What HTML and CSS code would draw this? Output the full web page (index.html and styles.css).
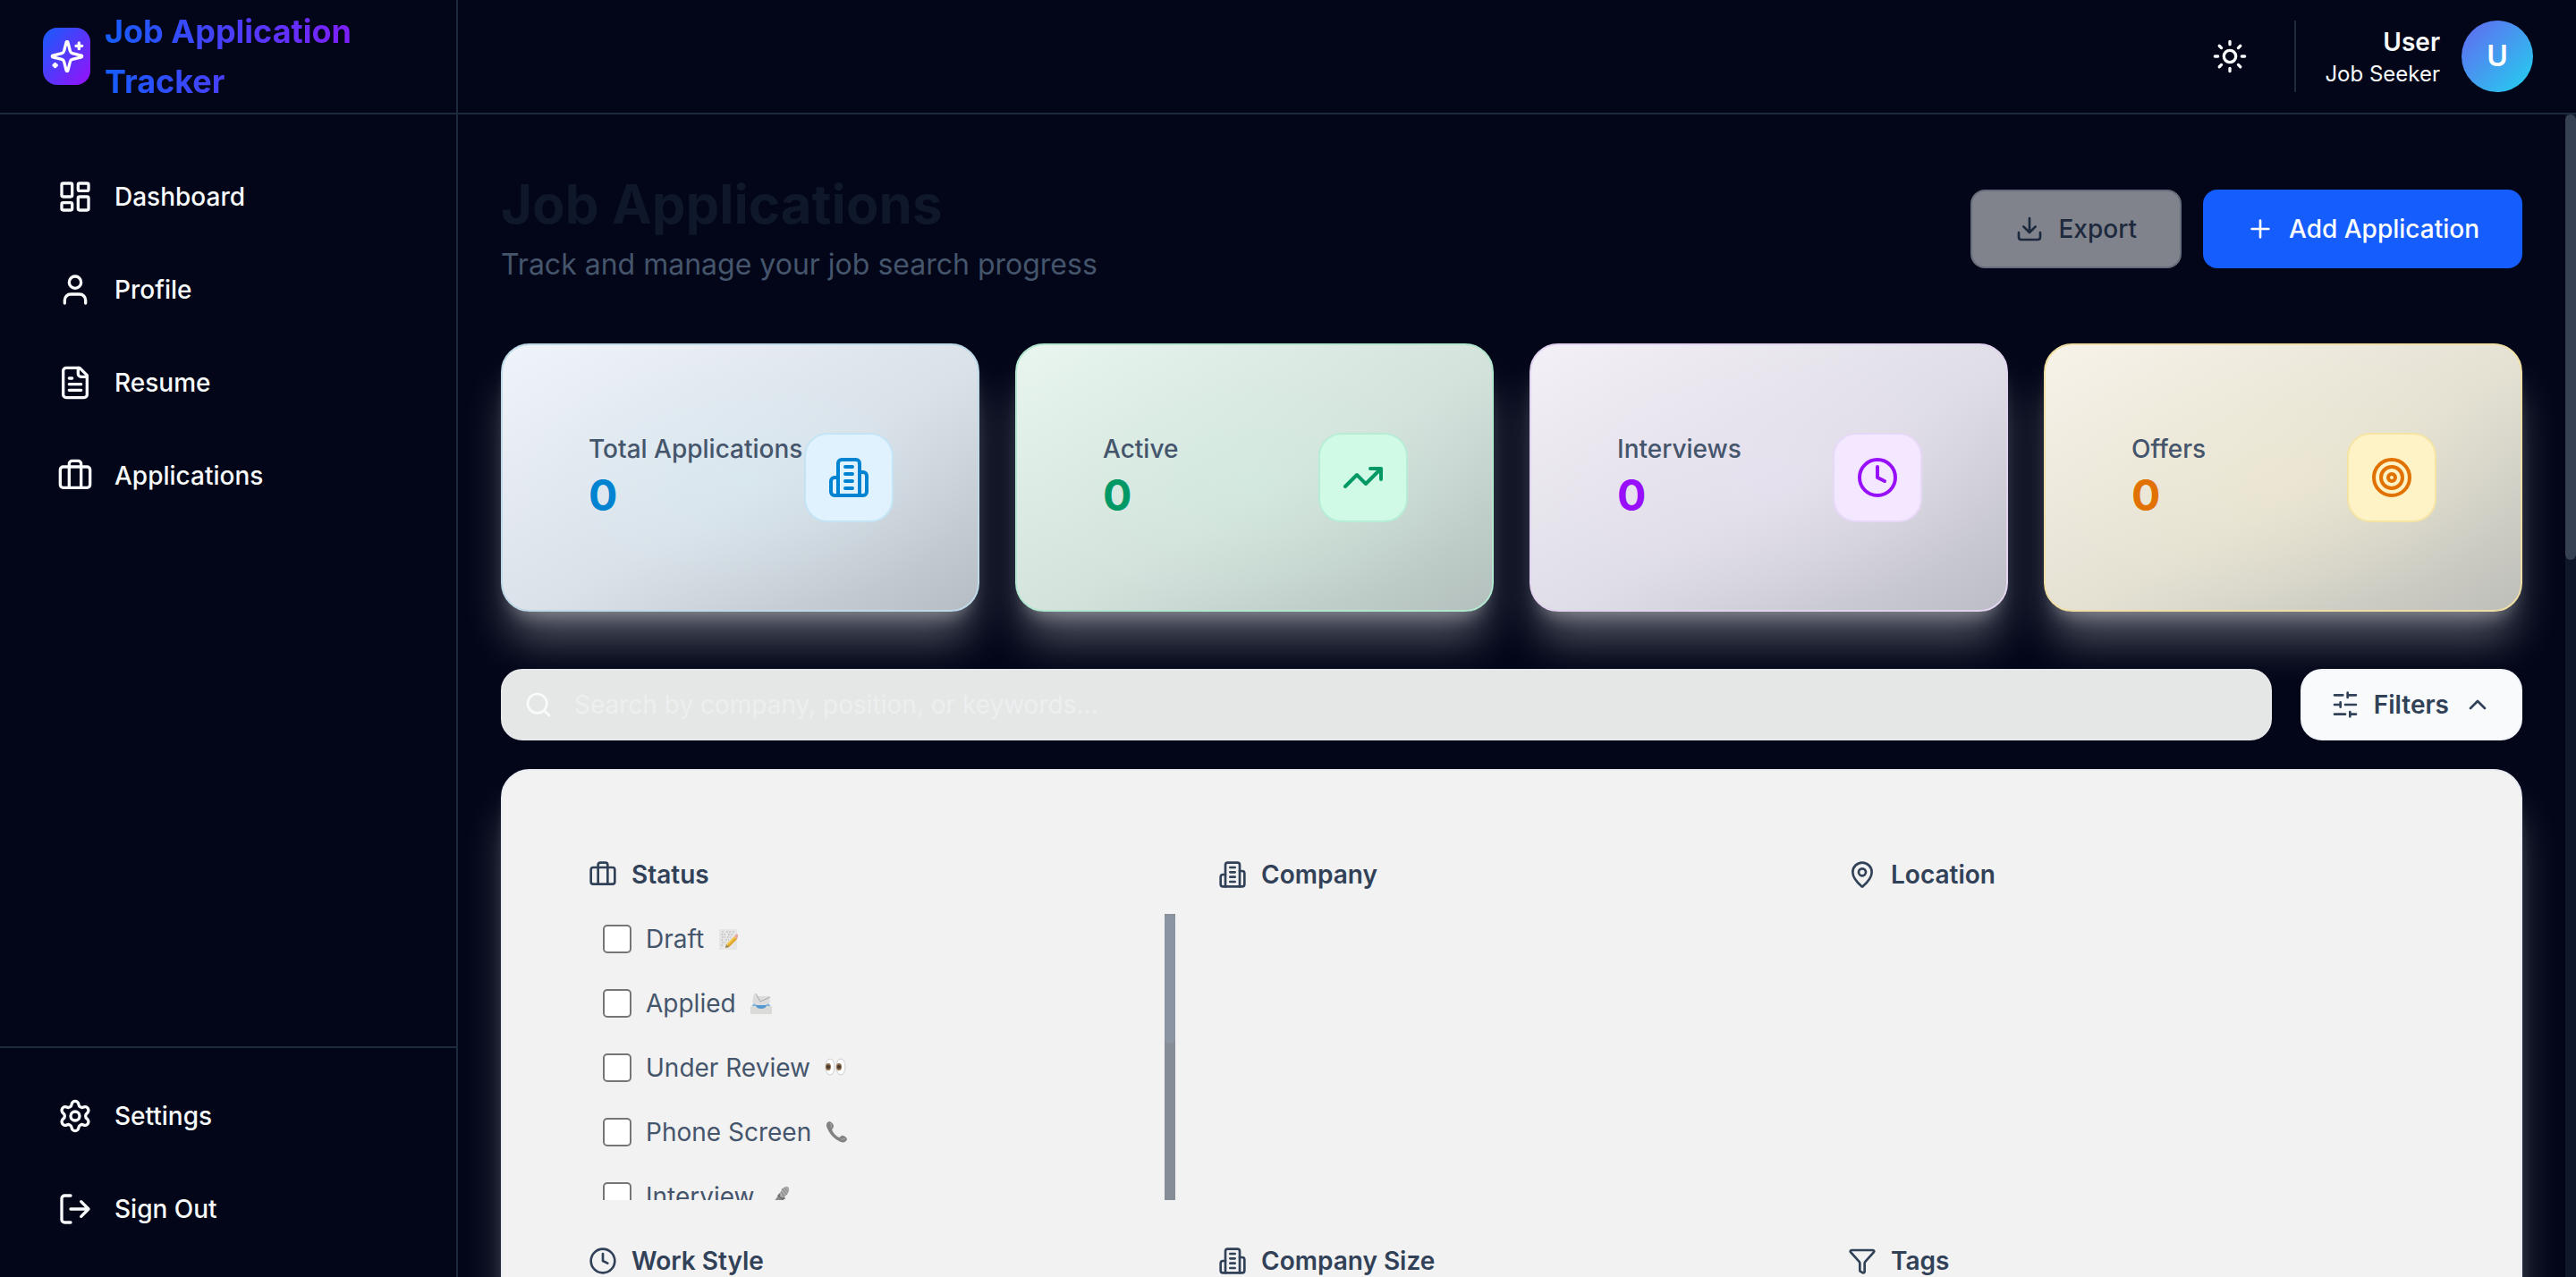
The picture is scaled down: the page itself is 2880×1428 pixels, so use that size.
FILE: index.html
```html
<!DOCTYPE html>
<html lang="en">
<head>
<meta charset="utf-8">
<meta name="viewport" content="width=device-width, initial-scale=1">
<title>Job Application Tracker</title>
<link rel="stylesheet" href="styles.css">
</head>
<body>
<svg class="sprite" aria-hidden="true">
  <symbol id="i-sparkles" viewBox="0 0 24 24"><path d="M9.937 15.5A2 2 0 0 0 8.5 14.063l-6.135-1.582a.5.5 0 0 1 0-.962L8.5 9.936A2 2 0 0 0 9.937 8.5l1.582-6.135a.5.5 0 0 1 .963 0L14.063 8.5A2 2 0 0 0 15.5 9.937l6.135 1.581a.5.5 0 0 1 0 .964L15.5 14.063a2 2 0 0 0-1.437 1.437l-1.582 6.135a.5.5 0 0 1-.963 0z"/><path d="M20 3v4M22 5h-4M4 17v2M5 18H3"/></symbol>
  <symbol id="i-dashboard" viewBox="0 0 24 24"><rect width="7" height="9" x="3" y="3" rx="1"/><rect width="7" height="5" x="14" y="3" rx="1"/><rect width="7" height="9" x="14" y="12" rx="1"/><rect width="7" height="5" x="3" y="16" rx="1"/></symbol>
  <symbol id="i-user" viewBox="0 0 24 24"><path d="M19 21v-2a4 4 0 0 0-4-4H9a4 4 0 0 0-4 4v2"/><circle cx="12" cy="7" r="4"/></symbol>
  <symbol id="i-file" viewBox="0 0 24 24"><path d="M15 2H6a2 2 0 0 0-2 2v16a2 2 0 0 0 2 2h12a2 2 0 0 0 2-2V7Z"/><path d="M14 2v4a2 2 0 0 0 2 2h4M10 9H8M16 13H8M16 17H8"/></symbol>
  <symbol id="i-briefcase" viewBox="0 0 24 24"><path d="M16 20V4a2 2 0 0 0-2-2h-4a2 2 0 0 0-2 2v16"/><rect width="20" height="14" x="2" y="6" rx="2"/></symbol>
  <symbol id="i-settings" viewBox="0 0 24 24"><path d="M9.671 4.136a2.34 2.34 0 0 1 4.659 0 2.34 2.34 0 0 0 3.319 1.915 2.34 2.34 0 0 1 2.33 4.033 2.34 2.34 0 0 0 0 3.831 2.34 2.34 0 0 1-2.33 4.033 2.34 2.34 0 0 0-3.319 1.915 2.34 2.34 0 0 1-4.659 0 2.34 2.34 0 0 0-3.32-1.915 2.34 2.34 0 0 1-2.33-4.033 2.34 2.34 0 0 0 0-3.831A2.34 2.34 0 0 1 6.35 6.051a2.34 2.34 0 0 0 3.319-1.915"/><circle cx="12" cy="12" r="3"/></symbol>
  <symbol id="i-logout" viewBox="0 0 24 24"><path d="m16 17 5-5-5-5M21 12H9M9 21H5a2 2 0 0 1-2-2V5a2 2 0 0 1 2-2h4"/></symbol>
  <symbol id="i-sun" viewBox="0 0 24 24"><circle cx="12" cy="12" r="4"/><path d="M12 2v2M12 20v2M4.93 4.93l1.41 1.41M17.66 17.66l1.41 1.41M2 12h2M20 12h2M6.34 17.66l-1.41 1.41M19.07 4.93l-1.41 1.41"/></symbol>
  <symbol id="i-download" viewBox="0 0 24 24"><path d="M12 15V3M21 15v4a2 2 0 0 1-2 2H5a2 2 0 0 1-2-2v-4M7 10l5 5 5-5"/></symbol>
  <symbol id="i-plus" viewBox="0 0 24 24"><path d="M5 12h14M12 5v14"/></symbol>
  <symbol id="i-building" viewBox="0 0 24 24"><path d="M6 22V4a2 2 0 0 1 2-2h8a2 2 0 0 1 2 2v18Z"/><path d="M6 12H4a2 2 0 0 0-2 2v6a2 2 0 0 0 2 2h2M18 9h2a2 2 0 0 1 2 2v9a2 2 0 0 1-2 2h-2M10 6h4M10 10h4M10 14h4M10 18h4"/></symbol>
  <symbol id="i-trend" viewBox="0 0 24 24"><path d="M16 7h6v6M22 7l-8.500 8.500-5-5L2 17"/></symbol>
  <symbol id="i-clock" viewBox="0 0 24 24"><circle cx="12" cy="12" r="10"/><path d="M12 6v6l4 2"/></symbol>
  <symbol id="i-target" viewBox="0 0 24 24"><circle cx="12" cy="12" r="10"/><circle cx="12" cy="12" r="6"/><circle cx="12" cy="12" r="2"/></symbol>
  <symbol id="i-search" viewBox="0 0 24 24"><path d="m21 21-4.340-4.340"/><circle cx="11" cy="11" r="8"/></symbol>
  <symbol id="i-sliders" viewBox="0 0 24 24"><path d="M21 4h-7M10 4H3M21 12h-9M8 12H3M21 20h-5M12 20H3M14 2v4M8 10v4M16 18v4"/></symbol>
  <symbol id="i-chevron-up" viewBox="0 0 24 24"><path d="m18 15-6-6-6 6"/></symbol>
  <symbol id="i-pin" viewBox="0 0 24 24"><path d="M20 10c0 4.993-5.539 10.193-7.399 11.799a1 1 0 0 1-1.202 0C9.539 20.193 4 14.993 4 10a8 8 0 0 1 16 0"/><circle cx="12" cy="10" r="3"/></symbol>
  <symbol id="i-funnel" viewBox="0 0 24 24"><path d="M10 20a1 1 0 0 0 .553.895l2 1A1 1 0 0 0 14 21v-7a2 2 0 0 1 .517-1.341L21.740 4.670A1 1 0 0 0 21 3H3a1 1 0 0 0-.742 1.670l7.225 7.989A2 2 0 0 1 10 14z"/></symbol>
</svg>

<div class="app">
  <aside class="sidebar">
    <div class="brand">
      <span class="brand-mark"><svg class="icon icon-md"><use href="#i-sparkles"/></svg></span>
      <span class="brand-name">Job Application Tracker</span>
    </div>
    <nav class="nav" aria-label="Main">
      <a class="nav-link" href="#dashboard"><svg class="icon icon-md"><use href="#i-dashboard"/></svg>Dashboard</a>
      <a class="nav-link" href="#profile"><svg class="icon icon-md"><use href="#i-user"/></svg>Profile</a>
      <a class="nav-link" href="#resume"><svg class="icon icon-md"><use href="#i-file"/></svg>Resume</a>
      <a class="nav-link" href="#applications"><svg class="icon icon-md"><use href="#i-briefcase"/></svg>Applications</a>
    </nav>
    <div class="nav nav-footer">
      <a class="nav-link" href="#settings"><svg class="icon icon-md"><use href="#i-settings"/></svg>Settings</a>
      <button class="nav-link" type="button"><svg class="icon icon-md"><use href="#i-logout"/></svg>Sign Out</button>
    </div>
  </aside>

  <div class="workspace">
    <header class="topbar">
      <button class="theme-toggle" type="button" aria-label="Toggle theme"><svg class="icon icon-md"><use href="#i-sun"/></svg></button>
      <div class="account">
        <div class="account-text">
          <span class="account-name">User</span>
          <span class="account-role">Job Seeker</span>
        </div>
        <span class="avatar">U</span>
      </div>
    </header>

    <div class="viewport">
      <main class="content">
        <div class="page-head">
          <div>
            <h1 class="page-title">Job Applications</h1>
            <p class="page-subtitle">Track and manage your job search progress</p>
          </div>
          <div class="actions">
            <button class="btn btn-export" type="button" disabled><svg class="icon icon-sm"><use href="#i-download"/></svg>Export</button>
            <button class="btn btn-primary" type="button"><svg class="icon icon-sm"><use href="#i-plus"/></svg>Add Application</button>
          </div>
        </div>

        <section class="stats" aria-label="Statistics">
          <article class="stat stat-sky">
            <div><p class="stat-label">Total Applications</p><p class="stat-value">0</p></div>
            <span class="stat-icon"><svg class="icon icon-lg"><use href="#i-building"/></svg></span>
          </article>
          <article class="stat stat-green">
            <div><p class="stat-label">Active</p><p class="stat-value">0</p></div>
            <span class="stat-icon"><svg class="icon icon-lg"><use href="#i-trend"/></svg></span>
          </article>
          <article class="stat stat-purple">
            <div><p class="stat-label">Interviews</p><p class="stat-value">0</p></div>
            <span class="stat-icon"><svg class="icon icon-lg"><use href="#i-clock"/></svg></span>
          </article>
          <article class="stat stat-amber">
            <div><p class="stat-label">Offers</p><p class="stat-value">0</p></div>
            <span class="stat-icon"><svg class="icon icon-lg"><use href="#i-target"/></svg></span>
          </article>
        </section>

        <section class="finder">
          <div class="search-row">
            <label class="search">
              <svg class="icon icon-sm"><use href="#i-search"/></svg>
              <input class="search-input" type="text" aria-label="Search applications" placeholder="Search by company, position, or keywords...">
            </label>
            <button class="filters-btn" type="button" aria-expanded="true"><svg class="icon icon-sm"><use href="#i-sliders"/></svg>Filters<svg class="icon icon-sm"><use href="#i-chevron-up"/></svg></button>
          </div>

          <div class="panel">
            <section class="facet">
              <h2 class="facet-title"><svg class="icon icon-sm"><use href="#i-briefcase"/></svg>Status</h2>
              <div class="facet-body">
                <div class="options">
                  <label class="option"><input class="check" type="checkbox">Draft
                    <svg class="emoji" viewBox="0 0 24 24" role="img" aria-label="memo"><rect x="1" y="1" width="20" height="23" fill="#e6e6e6"/><path d="M4 4h3M9 4h5M16 4h2M3 7h6M11 7h5M4 10h4M10 10h4M3 13h3M8 13h4M4 16h4M3 19h3" stroke="#b4b4b4" stroke-width="1" stroke-dasharray="2 1"/><path d="M8 22l1-4 9-9 3 3-9 9z" fill="#f3c74a"/><path d="M10 20l9-9 2 1-9 9z" fill="#dca32e"/><path d="M8 22l1-4 3 3z" fill="#8d8267"/><path d="M18 9l2-2c1-1 2 0 2 1s0 2-1 4z" fill="#e9a3a0"/></svg></label>
                  <label class="option"><input class="check" type="checkbox">Applied
                    <svg class="emoji" viewBox="0 0 24 24" role="img" aria-label="incoming envelope"><path d="M2 14l3-3h14l3 3v3H2z" fill="#83b4dc"/><path d="M4 1l4 3 13 0 1 7-10 6L2 11z" fill="#dcdcdc"/><path d="M6 1l5 9 11-5" fill="none" stroke="#a8a8a8" stroke-width="1"/><path d="M6 14h12l-2 4H8z" fill="#5697d0"/><path d="M0 15h6c1 4 11 4 12 0h6v8q0 1-1 1H1q-1 0-1-1z" fill="#dadad8"/></svg></label>
                  <label class="option"><input class="check" type="checkbox">Under Review
                    <svg class="emoji" viewBox="0 0 24 24" role="img" aria-label="eyes"><ellipse cx="6" cy="11" rx="5" ry="9" fill="#fff" stroke="#ccc"/><ellipse cx="18" cy="11" rx="5" ry="9" fill="#fff" stroke="#ccc"/><ellipse cx="4" cy="11" rx="3" ry="4" fill="#8f6b48"/><ellipse cx="16" cy="11" rx="3" ry="4" fill="#8f6b48"/><circle cx="4" cy="11" r="2" fill="#443a33"/><circle cx="16" cy="11" r="2" fill="#443a33"/></svg></label>
                  <label class="option"><input class="check" type="checkbox">Phone Screen
                    <svg class="emoji" viewBox="0 0 24 24" role="img" aria-label="telephone receiver"><path d="M4 0C1 1 0 4 2 8c3 7 8 12 15 15 3 1 6 0 7-3 0-2-4-5-6-4l-3 2C11 16 8 12 7 9c1-1 2-2 2-4S6 0 4 0z" fill="#828282"/><path d="M5 2c1 1 2 3 1 5M17 20c2 0 4 0 5-1" fill="none" stroke="#b0b0b0"/></svg></label>
                  <label class="option"><input class="check" type="checkbox">Interview
                    <svg class="emoji" viewBox="0 0 24 24" role="img" aria-label="microphone"><path d="M12 8l6 6L5 24H1z" fill="#8b8b8b"/><path d="M12 8l6 6-3 2-6-5z" fill="#6f6f6f"/><ellipse cx="17" cy="7" rx="4" ry="7" transform="rotate(35 17 7)" fill="#a8a8a8"/><path d="M14 3l6 7M17 2l4 5M13 7l4 5" stroke="#8a8a8a" stroke-width="1"/></svg></label>
                </div>
                <div class="track track-list" aria-hidden="true"><span class="thumb"></span></div>
              </div>
            </section>
            <section class="facet"><h2 class="facet-title"><svg class="icon icon-sm"><use href="#i-building"/></svg>Company</h2></section>
            <section class="facet"><h2 class="facet-title"><svg class="icon icon-sm"><use href="#i-pin"/></svg>Location</h2></section>
            <section class="facet"><h2 class="facet-title"><svg class="icon icon-sm"><use href="#i-clock"/></svg>Work Style</h2></section>
            <section class="facet"><h2 class="facet-title"><svg class="icon icon-sm"><use href="#i-building"/></svg>Company Size</h2></section>
            <section class="facet"><h2 class="facet-title"><svg class="icon icon-sm"><use href="#i-funnel"/></svg>Tags</h2></section>
          </div>
        </section>
      </main>
      <div class="track track-page" aria-hidden="true"><span class="thumb"></span></div>
    </div>
  </div>
</div>
</body>
</html>
```
FILE: styles.css
```css
:root {
  --bg: #020618;
  --line: #1d293d;
  --ink: #314158;
  --muted: #45556c;
  --glow: 0 40px 50px -10px rgba(255, 255, 255, 0.34), 0 16px 20px -12px rgba(255, 255, 255, 0.34);
}

*, *::before, *::after { box-sizing: border-box; }

body {
  margin: 0;
  background: var(--bg);
  color: #f8fafc;
  font-family: Inter, "Liberation Sans", sans-serif;
  font-size: 28px;
  line-height: 40px;
}

h1, h2, p { margin: 0; }

button, input { font: inherit; color: inherit; }

button { border: 0; background: none; padding: 0; cursor: pointer; }

.sprite { display: none; }

.icon {
  flex: none;
  fill: none;
  stroke: currentColor;
  stroke-width: 2;
  stroke-linecap: round;
  stroke-linejoin: round;
}
.icon-sm { width: 32px; height: 32px; }
.icon-md { width: 40px; height: 40px; }
.icon-lg { width: 48px; height: 48px; }

.app { display: flex; height: 100vh; overflow: hidden; }

/* Sidebar */
.sidebar {
  flex: none;
  display: flex;
  flex-direction: column;
  width: 512px;
  border-right: 2px solid var(--line);
}
.brand {
  flex: none;
  display: flex;
  align-items: center;
  gap: 16px;
  height: 128px;
  padding: 0 48px;
  border-bottom: 2px solid var(--line);
}
.brand-mark {
  flex: none;
  display: flex;
  align-items: center;
  justify-content: center;
  width: 53px;
  height: 64px;
  border-radius: 16px;
  background: linear-gradient(to bottom right, #155dfc, #9810fa);
  color: #fff;
}
.brand-name {
  flex: 1;
  font-size: 36px;
  line-height: 56px;
  font-weight: 700;
  background: linear-gradient(to right, #155dfc, #9810fa);
  background-clip: text;
  -webkit-background-clip: text;
  color: transparent;
}
.nav {
  flex: 1;
  display: flex;
  flex-direction: column;
  gap: 16px;
  padding: 48px 32px;
}
.nav-footer {
  flex: none;
  padding: 32px;
  border-top: 2px solid var(--line);
}
.nav-link {
  display: flex;
  align-items: center;
  gap: 24px;
  padding: 24px 32px;
  color: #f8fafc;
  font-weight: 500;
  text-decoration: none;
}

/* Top bar */
.workspace { flex: 1; min-width: 0; display: flex; flex-direction: column; }
.topbar {
  flex: none;
  display: flex;
  align-items: center;
  justify-content: flex-end;
  gap: 32px;
  height: 128px;
  padding: 0 48px;
  border-bottom: 2px solid var(--line);
}
.theme-toggle {
  display: flex;
  align-items: center;
  justify-content: center;
  width: 80px;
  height: 80px;
}
.account {
  display: flex;
  align-items: center;
  gap: 24px;
  padding-left: 32px;
  border-left: 2px solid var(--line);
}
.account-text { display: flex; flex-direction: column; text-align: right; }
.account-name { font-weight: 600; }
.account-role { font-size: 24px; line-height: 32px; }
.avatar {
  display: flex;
  align-items: center;
  justify-content: center;
  width: 80px;
  height: 80px;
  border-radius: 50%;
  background: linear-gradient(to bottom right, #6366f1, #22d3ee);
  color: #fff;
  font-size: 32px;
  font-weight: 600;
}

/* Scrolling area */
.viewport { flex: 1; min-height: 0; display: flex; }
.content {
  flex: 1;
  min-width: 0;
  display: flex;
  flex-direction: column;
  gap: 64px;
  padding: 64px 48px;
  overflow: hidden;
}
.content > * { flex: none; }
.track { flex: none; width: 12px; }
.thumb { display: block; border-radius: 6px; }
.track-page { background: #0f172b; }
.track-page .thumb { height: 38.3%; background: #364153; }
.track-list { background: #878d97; }
.track-list .thumb { height: 45.3%; background: #8b94a2; }

.page-head { display: flex; align-items: center; justify-content: space-between; }
.page-title { font-size: 60px; line-height: 72px; font-weight: 700; color: #0f172b; }
.page-subtitle { margin-top: 8px; font-size: 32px; line-height: 48px; color: var(--muted); }
.actions { display: flex; gap: 24px; }
.btn {
  display: flex;
  align-items: center;
  gap: 16px;
  height: 88px;
  padding: 0 48px;
  border-radius: 16px;
  font-weight: 500;
}
.btn-export { border: 2px solid #666d7d; background: #81838c; color: #1d293d; }
.btn-primary { background: #155dfc; color: #fff; }

/* Stat cards */
.stats { display: grid; grid-template-columns: repeat(4, 1fr); gap: 40px; }
.stat {
  display: flex;
  align-items: center;
  justify-content: space-between;
  padding: 96px;
  border: 2px solid var(--edge);
  border-radius: 32px;
  background:
    radial-gradient(closest-side, var(--tint), transparent) padding-box,
    linear-gradient(to bottom right, var(--from), var(--via) 54%, var(--to)) border-box;
  box-shadow: var(--glow);
}
.stat-label { color: var(--muted); font-weight: 500; white-space: nowrap; }
.stat-value { font-size: 48px; line-height: 64px; font-weight: 700; color: var(--accent); }
.stat-icon {
  flex: none;
  display: flex;
  padding: 24px;
  border-radius: 24px;
  background: var(--chip);
  box-shadow: 0 0 0 2px var(--chip-edge);
  color: var(--accent);
}
.stat-sky { --from: #eff4fa; --via: #dae1e8; --to: #b6bcc3; --tint: rgba(214, 238, 246, 0.4); --edge: #bfd9e8; --accent: #0084d1; --chip: #dff2fe; --chip-edge: #c4e4f6; }
.stat-green { --from: #e9f6f0; --via: #d4e2dc; --to: #b2bfbc; --tint: rgba(208, 240, 224, 0.4); --edge: #b2e6cf; --accent: #009966; --chip: #d0fae5; --chip-edge: #b7edd6; }
.stat-purple { --from: #f3f0f7; --via: #dfdde6; --to: #bbbcc5; --tint: rgba(236, 228, 246, 0.4); --edge: #e2d4f0; --accent: #9810fa; --chip: #f3e8ff; --chip-edge: #e8d8f8; }
.stat-amber { --from: #f8f3e9; --via: #e4e1d3; --to: #bdbeb9; --tint: rgba(244, 236, 208, 0.4); --edge: #f0dfa4; --accent: #e17100; --chip: #fef3c6; --chip-edge: #f5e4a4; }

/* Search and filters */
.finder { display: flex; flex-direction: column; gap: 32px; }
.search-row { display: flex; gap: 32px; }
.search {
  flex: 1;
  display: flex;
  align-items: center;
  gap: 24px;
  height: 80px;
  padding: 0 24px;
  border: 2px solid #e5e7e9;
  border-radius: 24px;
  background: #e5e7e7;
}
.search-input { flex: 1; min-width: 0; padding: 0; border: 0; outline: 0; background: none; color: var(--ink); }
.search-input::placeholder { color: #edeeef; opacity: 1; }
.filters-btn {
  display: flex;
  align-items: center;
  gap: 16px;
  height: 80px;
  padding: 0 32px;
  border: 2px solid #f1f5f9;
  border-radius: 24px;
  background: #f8fafc;
  color: var(--ink);
  font-weight: 600;
}
.panel {
  display: grid;
  grid-template-columns: repeat(3, 1fr);
  gap: 48px;
  padding: 96px;
  border: 2px solid #e9ecf2;
  border-radius: 32px;
  background: #f2f2f2;
  color: var(--ink);
  box-shadow: var(--glow);
}
.facet { display: flex; flex-direction: column; gap: 24px; }
.facet-title { display: flex; align-items: center; gap: 16px; font-size: 28px; line-height: 40px; font-weight: 600; }
.facet-body { display: flex; height: 320px; overflow: hidden; }
.options { flex: 1; display: flex; flex-direction: column; gap: 16px; }
.option { flex: none; display: flex; align-items: center; gap: 16px; padding: 8px 16px; color: var(--muted); }
.check {
  appearance: none;
  width: 32px;
  height: 32px;
  margin: 0;
  border: 2px solid #767676;
  border-radius: 5px;
  background: #fff;
}
.emoji { flex: none; width: 24px; height: 24px; }
```
